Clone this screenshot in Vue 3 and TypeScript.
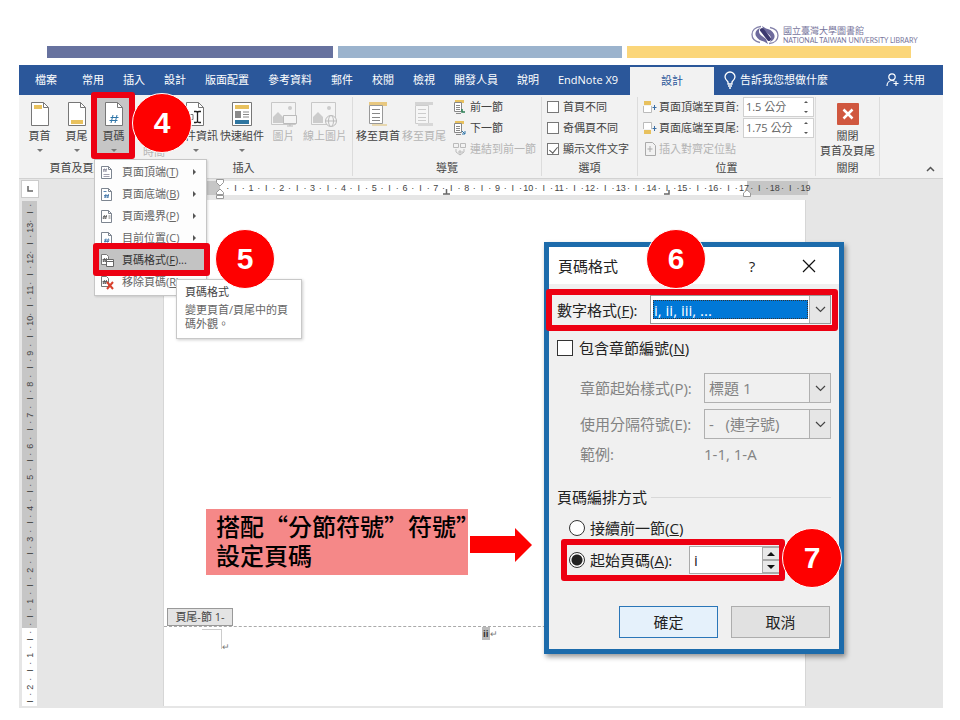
<script setup lang="ts">
import { ref } from 'vue'

const tabs: string[] = ['常用', '插入', '設計', '版面配置', '參考資料', '郵件', '校閱', '檢視', '開發人員', '說明', 'EndNote X9']

interface MenuRow { label: string; key: string; icon: string; sub?: boolean; dots?: boolean; active?: boolean }
const menuRows: MenuRow[] = [
  { label: '頁面頂端', key: 'T', icon: 'top', sub: true },
  { label: '頁面底端', key: 'B', icon: 'bottom', sub: true },
  { label: '頁面邊界', key: 'P', icon: 'margin', sub: true },
  { label: '目前位置', key: 'C', icon: 'current', sub: true },
  { label: '頁碼格式', key: 'F', icon: 'format', dots: true, active: true },
  { label: '移除頁碼', key: 'R', icon: 'remove' },
]

const upTo = (n: number): string[] =>
  Array.from({ length: n }, (_, i) => ['·', 'I', '·', String(i + 1)]).flat()

const horizontalMarks: string[] = upTo(19)
const verticalMarks: string[] = upTo(13).concat(['·', 'I', '·']).reverse()
const footerMarks: string[] = ['·', 'I', '·', '1', '·', 'I', '·', '2', '·', 'I']

const firstDifferent = ref(false)
const oddEven = ref(false)
const showText = ref(true)
const headerGap = ref('1.5 公分')
const footerGap = ref('1.75 公分')
const includeChapter = ref(false)
const numbering = ref('start')
const startAt = ref('i')
</script>

<template>
  <main class="slide">
    <header class="masthead">
      <div class="logo">
        <svg class="logo-mark" viewBox="0 0 28 20" aria-hidden="true">
          <g fill="none" stroke="#8583ab" stroke-width="1.3">
            <path d="M10 1.500C4 2 1 5.500 1 9.500s3 7 8 8" />
            <path d="M18 18.500c6-.5 9-4 9-8s-3-7-8-8" />
          </g>
          <path d="M9 3C5 4.500 3.500 8 5 11s4.500 5 8 5.500L17 19l-2-5-4-3C8 9 7 6.500 9 3z" fill="#6d6a9c" />
          <path d="M19 17c4-1.500 5.500-5 4-8s-4.500-5-8-5.500L11 1l2 5 4 3c3 2 4 4.500 2 8z" fill="#6d6a9c" />
          <path d="M11 5l7 9" stroke="#3c396f" stroke-width="4" stroke-linecap="round" />
        </svg>
        <div class="logo-text">
          <strong>國立臺灣大學圖書館</strong>
          <span>NATIONAL TAIWAN UNIVERSITY LIBRARY</span>
        </div>
      </div>
      <div class="bars"><i class="bar navy"></i><i class="bar sky"></i><i class="bar gold"></i></div>
    </header>

    <section class="word">
      <nav class="tabs">
        <button class="tab file">檔案</button>
        <button v-for="t in tabs" :key="t" class="tab">{{ t }}</button>
        <button class="tab current">設計</button>
        <button class="tab tell">
          <svg width="12" height="18" viewBox="0 0 12 18" fill="none" stroke="#fff" stroke-width="1.3" aria-hidden="true">
            <path d="M4 13v-2C2 9 1 8 1 6a5 5 0 0 1 10 0c0 2-1 3-3 5v2zM4 15h4M5 17h2" />
          </svg>
          告訴我您想做什麼
        </button>
        <button class="tab share">
          <svg width="13" height="14" viewBox="0 0 13 14" fill="none" stroke="#fff" stroke-width="1.2" aria-hidden="true">
            <circle cx="6" cy="4" r="3.2" /><path d="M1 13c0-3 2-5.500 5-5.500 1 0 2 .3 2.500.8M10 8v5M7.500 10.500h5" />
          </svg>
          共用
        </button>
      </nav>

      <div class="ribbon">
        <section class="group g-hf">
          <div class="tools">
            <button class="big">
              <svg width="20" height="26" viewBox="0 0 20 26" aria-hidden="true"><path d="M1.500 1.500h12l5 5v18h-17z" fill="#fff" stroke="#777" /><path d="M13.500 1.500v5h5" fill="none" stroke="#777" /><path d="M4 4h8v4H4z" fill="#e8c15e" /></svg>
              <span>頁首</span><i class="caret"></i>
            </button>
            <button class="big">
              <svg width="20" height="26" viewBox="0 0 20 26" aria-hidden="true"><path d="M1.500 1.500h12l5 5v18h-17z" fill="#fff" stroke="#777" /><path d="M13.500 1.500v5h5" fill="none" stroke="#777" /><path d="M4 19h12v4H4z" fill="#e8c15e" /></svg>
              <span>頁尾</span><i class="caret"></i>
            </button>
            <button class="big pressed">
              <svg width="20" height="26" viewBox="0 0 20 26" aria-hidden="true"><path d="M1.500 1.500h12l5 5v18h-17z" fill="#fff" stroke="#777" /><path d="M13.500 1.500v5h5" fill="none" stroke="#777" /><path d="M9 14l-2 8M13 14l-2 8M6.500 16.500h8M5.500 19.500h8" fill="none" stroke="#2e75a8" /></svg>
              <span>頁碼</span><i class="caret"></i>
            </button>
          </div>
          <h2>頁首及頁尾</h2>
        </section>

        <section class="group g-insert">
          <div class="tools">
            <button class="big date off"><svg width="20" height="26" viewBox="0 0 20 26" aria-hidden="true"><path d="M2 4h16v18H2z" fill="#fff" stroke="#999" /></svg><span>日期及<br />時間</span></button>
            <button class="big wide">
              <svg width="26" height="26" viewBox="0 0 26 26" aria-hidden="true"><path d="M3.500 1.500h12l5 5v18h-17z" fill="#fff" stroke="#777" /><path d="M15.500 1.500v5h5" fill="none" stroke="#777" /><path d="M11 10.500h2q1 0 1.500 1 .5-1 1.500-1h2M11 21.500h2q1 0 1.500-1 .5 1 1.500 1h2M14.500 11v10" fill="none" stroke="#222" stroke-width="1.300" /><path d="M5 13.500h5v5H5" fill="none" stroke="#777" /></svg>
              <span>文件資訊</span><i class="caret"></i>
            </button>
            <button class="big wide">
              <svg width="22" height="26" viewBox="0 0 22 26" aria-hidden="true"><path d="M1.500 1.500h19v23h-19z" fill="#fff" stroke="#777" /><path d="M4 4h14v4H4z" fill="#e8c15e" /><path d="M4 10h6v7H4z" fill="#8a8a8a" /><path d="M12 11h6M12 13.500h6M12 16h6" stroke="#888" /><path d="M4 19h14v4H4z" fill="#2e75a0" /></svg>
              <span>快速組件</span><i class="caret"></i>
            </button>
            <button class="big off" disabled>
              <svg width="28" height="26" viewBox="0 0 28 26" aria-hidden="true"><path d="M1.500 1.500h24v22h-24z" fill="#f4f4f4" stroke="#c8c8c8" /><circle cx="20" cy="7" r="2" fill="#ccc" /><path d="M3 22v-6l5-5 5 5v6z" fill="#ccc" /><path d="M13.500 14.500h13v8h-13zM20 22v3M17 25h6" fill="#f4f4f4" stroke="#bbb" /></svg>
              <span>圖片</span>
            </button>
            <button class="big wide off" disabled>
              <svg width="30" height="26" viewBox="0 0 30 26" aria-hidden="true"><path d="M1.500 1.500h24v22h-24z" fill="#f4f4f4" stroke="#c8c8c8" /><circle cx="19" cy="7" r="2" fill="#ccc" /><path d="M3 22v-6l5-5 5 5v6z" fill="#ccc" /><g fill="#f4f4f4" stroke="#bbb"><circle cx="21" cy="20" r="5.500" /><ellipse cx="21" cy="20" rx="2.500" ry="5.500" /><path d="M15.500 20h11" /></g></svg>
              <span>線上圖片</span>
            </button>
          </div>
          <h2>插入</h2>
        </section>

        <section class="group g-nav">
          <div class="tools">
            <button class="big wide">
              <svg width="22" height="26" viewBox="0 0 22 26" aria-hidden="true"><path d="M2 4V1h18v4h-5" fill="#e8c880" /><path d="M2.500 4.500h13v18h-13z" fill="#fff" stroke="#999" /><path d="M5 8.500h8M5 12.500h8M5 16.500h8M5 19.500h8" stroke="#888" /><path d="M5 23h15v2H5z" fill="#e8d8b0" /></svg>
              <span>移至頁首</span>
            </button>
            <button class="big wide off" disabled>
              <svg width="22" height="26" viewBox="0 0 22 26" aria-hidden="true"><path d="M2 4V1h18v3h-5" fill="#d4d4d4" /><path d="M2.500 4.500h13v18h-13z" fill="#f6f6f6" stroke="#ccc" /><path d="M5 8.500h8M5 12.500h8M5 16.500h8M5 19.500h8" stroke="#ccc" /><path d="M5 22h15v3H5z" fill="#d8d8d8" /></svg>
              <span>移至頁尾</span>
            </button>
            <div class="stack">
              <button class="small"><svg width="13" height="14" viewBox="0 0 13 14" aria-hidden="true"><path d="M2 0h9v3H2z" fill="#e8c15e" /><path d="M1.500 2.500h7v9h-7z" fill="#fff" stroke="#888" /><path d="M3 5.500h4M3 7.500h4M3 9.500h4M3 13.500h5" stroke="#888" /><path d="M12 12H9v-3" fill="none" stroke="#2c8055" stroke-width="1.500" /></svg>前一節</button>
              <button class="small"><svg width="13" height="14" viewBox="0 0 13 14" aria-hidden="true"><path d="M2 0h9v3H2z" fill="#e8c15e" /><path d="M1.500 2.500h7v9h-7z" fill="#fff" stroke="#888" /><path d="M3 5.500h4M3 7.500h4M3 9.500h4M3 13.500h5" stroke="#888" /><path d="M9 10l3 3M12 10v3H9" fill="none" stroke="#2e75a8" /></svg>下一節</button>
              <button class="small off" disabled><svg width="13" height="14" viewBox="0 0 13 14" fill="none" stroke="#bbb" aria-hidden="true"><path d="M.5 1.500h5v4h-5zM7.500 1.500h5v4h-5zM3 7v3l4 3 4-3V7M7 13V8M5 10h5" /></svg>連結到前一節</button>
            </div>
          </div>
          <h2>導覽</h2>
        </section>

        <section class="group g-opts">
          <div class="tools stack">
            <label class="small"><input v-model="firstDifferent" type="checkbox" class="box" />首頁不同</label>
            <label class="small"><input v-model="oddEven" type="checkbox" class="box" />奇偶頁不同</label>
            <label class="small"><input v-model="showText" type="checkbox" class="box" />顯示文件文字</label>
          </div>
          <h2>選項</h2>
        </section>

        <section class="group g-pos">
          <div class="tools stack">
            <div class="small">
              <svg width="14" height="14" viewBox="0 0 14 14" aria-hidden="true"><path d="M1 1h7v4H1z" fill="#e8c15e" /><path d="M.5 6v6.500h8V6" fill="#fff" stroke="#bbb" /><path d="M11.500 5v5M9.500 7.500h4" stroke="#3a6ea5" /></svg>
              <label for="gap-top">頁面頂端至頁首:</label>
              <span class="spin"><input id="gap-top" v-model="headerGap" type="text" /><i class="updown"></i></span>
            </div>
            <div class="small">
              <svg width="14" height="14" viewBox="0 0 14 14" aria-hidden="true"><path d="M.5 8V1.500h8V8" fill="#fff" stroke="#bbb" /><path d="M1 9h7v4H1z" fill="#e8c15e" /><path d="M11.500 5v5M9.500 7.500h4" stroke="#3a6ea5" /></svg>
              <label for="gap-bottom">頁面底端至頁尾:</label>
              <span class="spin"><input id="gap-bottom" v-model="footerGap" type="text" /><i class="updown"></i></span>
            </div>
            <button class="small off" disabled><svg width="14" height="14" viewBox="0 0 14 14" fill="none" stroke="#aaa" aria-hidden="true"><path d="M2.500.5h7l3 3v10h-10zM7 4v6M4.500 7h5" /></svg>插入對齊定位點</button>
          </div>
          <h2>位置</h2>
        </section>

        <section class="group g-close">
          <div class="tools">
            <button class="big shut">
              <svg width="22" height="26" viewBox="0 0 22 26" aria-hidden="true"><rect y="2" width="22" height="22" rx="1" fill="#d0573f" /><path d="M6.500 8.500l9 9M15.500 8.500l-9 9" stroke="#fff" stroke-width="2.500" /></svg>
              <span>關閉<br />頁首及頁尾</span>
            </button>
          </div>
          <h2>關閉</h2>
        </section>
        <button class="collapse" aria-label="摺疊"><svg width="9" height="6" viewBox="0 0 9 6" fill="none" stroke="#555" stroke-width="1.500"><path d="M1 5l3.500-3.500L8 5" /></svg></button>
      </div>

      <div class="workspace">
        <div class="corner"><svg width="8" height="8" viewBox="0 0 8 8" fill="none" stroke="#666" stroke-width="1.500"><path d="M2 1v5h5" /></svg></div>
        <div class="ruler">
          <div class="ruler-margin"></div>
          <div class="marks"><span v-for="(m, i) in horizontalMarks" :key="i">{{ m }}</span></div>
          <svg class="indent" width="10" height="22" viewBox="0 0 10 22" fill="#fff" stroke="#999" aria-hidden="true"><path d="M1.500 1.500h7v3L5 8 1.500 4.500zM5 11l3.500 3.500v2h-7v-2zM1.500 17.500h7v3h-7z" /></svg>
          <svg class="indent right" width="10" height="8" viewBox="0 0 10 8" fill="#fff" stroke="#999" aria-hidden="true"><path d="M5 1l3.500 3V7.500h-7V4z" /></svg>
          <svg class="stop" width="6" height="6" viewBox="0 0 6 6" fill="none" stroke="#666" stroke-width="1.500"><path d="M0 5h5V1" /></svg>
          <svg class="stop mid" width="7" height="6" viewBox="0 0 7 6" fill="none" stroke="#666" stroke-width="1.500"><path d="M0 5h7M3.500 0v5" /></svg>
        </div>
        <div class="vruler">
          <div class="vmarks body"><span v-for="(m, i) in verticalMarks" :key="i">{{ m }}</span></div>
          <div class="vmarks foot"><span v-for="(m, i) in footerMarks" :key="i">{{ m }}</span></div>
        </div>
        <article class="page">
          <div class="page-body"></div>
          <div class="page-foot">
            <span class="foot-tag">頁尾-節 1-</span>
            <div class="foot-line">
              <i class="crop"></i><span class="ret">↵</span>
              <p><mark>ii</mark>↵</p>
            </div>
          </div>
        </article>
      </div>
    </section>

    <menu class="dropdown">
      <li v-for="r in menuRows" :key="r.key">
        <button class="item" :class="{ active: r.active }">
          <svg width="14" height="15" viewBox="0 0 14 15" fill="none" aria-hidden="true">
            <path v-if="r.icon !== 'format' && r.icon !== 'remove'" d="M1.500 1.500h7l3 3v9h-10zM8.500 1.500v3h3" fill="#fff" stroke="#7d8590" />
            <path v-if="r.icon === 'top'" d="M4.500 3.500l-1 3M6.500 3.500l-1 3M3 4.500h4M3 6h4M3.500 9.500h6M3.500 11.500h6" stroke="#889" stroke-width=".8" />
            <path v-if="r.icon === 'bottom'" d="M6 7l-1 4M8.500 7l-1 4M4 8.500h5M4 10h5M3.500 4.500h3" stroke="#4a7bab" stroke-width=".9" />
            <path v-if="r.icon === 'margin'" d="M4.500 6l-1 4M6.500 6l-1 4M3 7.500h4M2.500 9h4M8.500 7h2M8.500 9h2" stroke="#666" stroke-width=".9" />
            <path v-if="r.icon === 'current'" d="M6 7.500l-1 4M8.500 7.500l-1 4M4 9h5.500M4 10.500h5" stroke="#4a7bab" stroke-width=".9" />
            <template v-if="r.icon === 'format' || r.icon === 'remove'">
              <path d="M1.500 1.500h5l2 2v8h-7z" fill="#fff" stroke="#777" />
              <path d="M4.500 5l-1 4M6.500 5l-1 4M2.500 6.500h5M2.500 8h4" stroke="#555" stroke-width=".9" />
              <path v-if="r.icon === 'format'" d="M6.500 6.500h7v7h-7zM6.500 8.500h7" fill="#fff" stroke="#666" />
              <path v-else d="M7 7l6 7M13 7l-6 7" stroke="#d8402c" stroke-width="2" />
            </template>
          </svg>
          <span class="item-label">{{ r.label }}(<u>{{ r.key }}</u>){{ r.dots ? '...' : '' }}</span>
          <i v-if="r.sub" class="sub"></i>
        </button>
      </li>
    </menu>

    <aside class="tooltip" role="tooltip"><b>頁碼格式</b><p>變更頁首/頁尾中的頁碼外觀。</p></aside>

    <p class="callout">搭配“分節符號”符號”<br />設定頁碼</p>
    <svg class="arrow" width="62" height="34" viewBox="0 0 62 34" aria-hidden="true"><path d="M0 8h45V0l17 17-17 17v-9H0z" fill="#fe0000" /></svg>

    <form class="dialog" @submit.prevent>
      <div class="titlebar">
        <h1>頁碼格式</h1>
        <button type="button" class="help">?</button>
        <button type="button" class="x" aria-label="關閉"><svg width="14" height="14" viewBox="0 0 14 14" stroke="#111" stroke-width="1.200"><path d="M1 1l12 12M13 1L1 13" /></svg></button>
      </div>
      <div class="content">
        <div class="row format">
          <label for="nf">數字格式(<u>F</u>):</label>
          <div class="picker chosen">
            <select id="nf"><option>i, ii, iii, ...</option></select>
            <i class="drop"><svg width="11" height="7" viewBox="0 0 11 7" fill="none" stroke="#444" stroke-width="1.200"><path d="M1 1l4.500 4.500L10 1" /></svg></i>
          </div>
        </div>
        <label class="row include"><input v-model="includeChapter" type="checkbox" class="box lg" /><span>包含章節編號(<u>N</u>)</span></label>
        <div class="chapter">
          <label for="ch">章節起始樣式(P):</label>
          <div class="picker">
            <select id="ch" disabled><option>標題 1</option></select>
            <i class="drop"><svg width="11" height="7" viewBox="0 0 11 7" fill="none" stroke="#444" stroke-width="1.200"><path d="M1 1l4.500 4.500L10 1" /></svg></i>
          </div>
          <label for="sp">使用分隔符號(E):</label>
          <div class="picker">
            <select id="sp" disabled><option>-&nbsp;&nbsp;&nbsp;(連字號)</option></select>
            <i class="drop"><svg width="11" height="7" viewBox="0 0 11 7" fill="none" stroke="#444" stroke-width="1.200"><path d="M1 1l4.500 4.500L10 1" /></svg></i>
          </div>
          <span class="sample">範例:</span><span class="sample">1-1, 1-A</span>
        </div>
        <div class="heading"><span>頁碼編排方式</span><i></i></div>
        <label class="row radio"><input v-model="numbering" type="radio" name="numbering" value="continue" /><span>接續前一節(<u>C</u>)</span></label>
        <div class="row radio start">
          <input id="st" v-model="numbering" type="radio" name="numbering" value="start" />
          <label for="st">起始頁碼(<u>A</u>):</label>
          <span class="stepper">
            <input v-model="startAt" type="text" aria-label="起始頁碼" />
            <span class="steps"><button type="button" aria-label="增加"><i class="up"></i></button><button type="button" aria-label="減少"><i class="down"></i></button></span>
          </span>
        </div>
        <div class="actions"><button type="submit" class="ok">確定</button><button type="button">取消</button></div>
      </div>
    </form>

    <i class="frame f4"></i><i class="frame f5"></i><i class="frame f6"></i><i class="frame f7"></i>
    <b class="badge b4">4</b><b class="badge b5">5</b><b class="badge b6">6</b><b class="badge b7">7</b>
  </main>
</template>

<style>
body { margin: 0; background: #fff; }
</style>

<style scoped>
* { box-sizing: border-box; }
button, input, select { font: inherit; color: inherit; margin: 0; }
button { border: 0; padding: 0; background: none; white-space: nowrap; }
h1, h2, p, menu { margin: 0; padding: 0; font-weight: 400; }
svg { display: block; flex: none; }
i { font-style: normal; }

.slide {
  position: relative; display: flex; flex-direction: column; min-height: 100vh;
  padding: 24px 17px 12px 19px; overflow: hidden;
  font: 11px/16px "Open Sans", "Noto Sans CJK TC", sans-serif; color: #444;
}
.masthead { display: flex; flex-direction: column; height: 41px; padding: 0 32px 0 28px; }
.logo { display: flex; align-items: center; gap: 4px; align-self: flex-end; height: 22px; color: #77759c; }
.logo-mark { width: 28px; height: 20px; }
.logo-text { display: flex; flex-direction: column; width: 128px; white-space: nowrap; }
.logo-text strong { font-size: 9px; line-height: 11px; font-weight: 400; }
.logo-text span { font: 7px/9px Lato, "Liberation Sans", sans-serif; }
.bars { display: flex; gap: 5px; }
.bar { flex: 284; height: 12px; }
.navy { flex-grow: 286; background: #67729f; }
.sky { background: #9bb3cd; }
.gold { background: #fbd67a; }

.word { display: flex; flex-direction: column; flex: 1; background: #e6e6e6; }
.tabs { display: flex; align-items: stretch; gap: 19px; height: 30px; padding: 0 18px 0 16px; background: #2b579a; }
.tab { color: #fff; line-height: 30px; }
.file { margin-right: 6px; }
.current { width: 84px; margin: 2px -9px 0 -7px; background: #f2f2f2; color: #2b579a; line-height: 26px; }
.tell, .share { display: flex; align-items: center; gap: 4px; }
.share { margin-left: auto; }

.ribbon { display: flex; height: 84px; padding: 2px 0; background: #f2f2f2; border-bottom: 1px solid #d2d2d2; }
.group { display: flex; flex-direction: column; border-right: 1px solid #dcdcdc; flex: none; }
.group h2 { font-size: 11px; line-height: 16px; text-align: center; white-space: nowrap; }
.tools { display: flex; height: 63px; }
.g-hf { width: 116px; border-right: 0; }
.g-hf .tools { padding-left: 2px; }
.g-insert { width: 218px; }
.g-nav { width: 189px; }
.g-nav .tools { padding-left: 2px; }
.g-opts { width: 96px; }
.g-opts .tools { padding-left: 5px; }
.g-pos { width: 178px; }
.g-pos .tools { padding-left: 5px; }
.g-close { width: 64px; }
.big { display: flex; flex-direction: column; align-items: center; flex: none; width: 37px; padding-top: 4px; }
.big svg { margin-bottom: 1px; }
.big.wide { width: 46px; }
.big.shut { width: 63px; }
.big.shut span { line-height: 15px; }
.big.date { width: 38px; }
.big.pressed { background: #c6c6c6; }
.off { color: #b5b5b5; }
.caret { margin-top: 5px; border: 3px solid transparent; border-top-color: #777; border-bottom: 0; }
.stack { display: flex; flex-direction: column; align-items: flex-start; gap: 1px; }
.g-nav .stack { padding-left: 6px; }
.small { display: flex; align-items: center; gap: 4px; height: 20px; white-space: nowrap; }
.g-pos .small { gap: 2px; }
.spin { display: flex; align-items: center; width: 71px; height: 20px; margin-left: 2px; padding-right: 4px; background: #fff; border: 1px solid #d0d0d0; color: #666; }
.spin input { width: 60px; border: 0; padding: 0 2px; background: none; line-height: 16px; }
.updown { display: flex; flex-direction: column; justify-content: space-between; height: 12px; }
.updown::before, .updown::after { content: ""; border: 2px solid transparent; }
.updown::before { border-bottom-color: #555; border-top: 0; }
.updown::after { border-top-color: #555; border-bottom: 0; }
.box { appearance: none; display: grid; place-items: center; width: 12px; height: 12px; background: #fff; border: 1px solid #777; flex: none; }
.box:checked::after { content: ""; width: 4px; height: 7px; border: solid #555; border-width: 0 1px 1px 0; transform: rotate(40deg); }
.collapse { margin: auto 8px 4px auto; }

.workspace { display: grid; grid-template: 21px 1fr / 144px 1fr; flex: 1; }
.corner { display: grid; place-items: center; width: 18px; height: 18px; margin: 1px 0 0 2px; background: #fff; border: 1px solid #ccc; }
.ruler { position: relative; display: flex; width: 645px; height: 14px; margin-top: 2px; background: linear-gradient(90deg, #c6c6c6 57px, #fff 57px 584px, #c6c6c6 584px); }
.ruler-margin { width: 61px; }
.marks { display: flex; flex: 1; margin-right: -1px; }
.marks span, .vmarks span { display: flex; flex: 1 1 0; justify-content: center; align-items: center; min-width: 0; min-height: 0; font: 9px/12px "Liberation Sans", sans-serif; color: #444; }
.indent { position: absolute; left: 52px; top: -3px; }
.indent.right { left: 579px; top: 8px; }
.stop { position: absolute; left: 501px; top: 8px; }
.stop.mid { left: 280px; top: 8px; }
.vruler { display: flex; flex-direction: column; width: 15px; margin: 1px 0 2px 3px; }
.vmarks { display: flex; flex-direction: column; }
.vmarks span { writing-mode: vertical-rl; transform: rotate(180deg); }
.vmarks.body { flex: 426; background: #c6c6c6; }
.vmarks.foot { flex: 78; background: #fff; }
.page { display: flex; flex-direction: column; width: 643px; margin-bottom: 2px; background: #fff; border: solid #d6d6d6; border-width: 0 1px; }
.page-body { flex: 1; }
.page-foot { height: 98px; }
.foot-tag { display: block; width: 66px; height: 18px; margin-left: 3px; background: #e4e4e4; border: 1px solid #999; text-align: center; white-space: nowrap; }
.foot-line { display: flex; border-top: 1px dashed #aaa; font-size: 9px; line-height: 14px; color: #777; }
.crop { width: 20px; height: 20px; margin: 2px 0 0 38px; border: solid #ccc; border-width: 1px 1px 0 0; }
.ret { margin-top: 13px; }
.foot-line p { margin-left: 252px; }
mark { padding: 0 1px; background: #bbb; color: #333; font-weight: 700; }

.dropdown { position: absolute; left: 94px; top: 159px; width: 113px; padding: 1px 1px 2px; background: #fdfdfd; border: 1px solid #c6c6c6; list-style: none; box-shadow: 1px 1px 2px #0002; color: #666; }
.item { display: flex; align-items: center; width: 100%; height: 22px; padding: 0 9px 0 4px; text-align: left; }
.item.active { background: #c3c3c3; color: #333; }
.item-label { margin-left: 8px; }
.sub { margin-left: auto; border: 3px solid transparent; border-left-color: #555; border-right: 0; }
.tooltip { position: absolute; left: 176px; top: 279px; width: 126px; padding: 5px 8px 7px; background: #fff; border: 1px solid #c8c8c8; box-shadow: 1px 1px 3px #0003; line-height: 14px; color: #666; }
.tooltip b { display: block; margin-bottom: 4px; font-weight: 400; color: #444; }
.callout { position: absolute; left: 206px; top: 509px; width: 262px; height: 66px; padding: 2px 0 4px 10px; background: #f58888; color: #000; font: 500 24px/29px "Noto Sans CJK TC", sans-serif; white-space: nowrap; }
.arrow { position: absolute; left: 470px; top: 528px; }

.dialog { position: absolute; left: 544px; top: 242px; width: 300px; border: 5px solid #1c6bab; background: #f0f0f0; color: #222; box-shadow: 2px 3px 5px #0006; font-size: 15px; line-height: 20px; }
.titlebar { display: flex; align-items: center; height: 37px; padding: 0 23px 0 9px; background: #fff; }
.titlebar h1 { flex: 1; font-size: 15px; }
.help { width: 14px; margin-right: 43px; }
.content { display: flex; flex-direction: column; padding: 11px 8px; }
.row { display: flex; align-items: center; }
.format { justify-content: space-between; height: 29px; }
.format label { white-space: nowrap; }
.picker { display: flex; align-items: stretch; height: 30px; border: 1px solid #b0b0b0; }
.picker select { appearance: none; flex: 1; min-width: 0; padding: 0 4px; border: 0; border-radius: 0; background: none; color: inherit; opacity: 1; }
.chosen { width: 181px; height: 29px; background: #fff; border-color: #999; }
.chosen select { margin: 4px 1px 4px 2px; padding: 0 1px; background: #0078d7; color: #fff; outline: 1px dotted #333; outline-offset: -1px; }
.drop { display: grid; place-items: center; width: 21px; background: #e6e6e6; border-left: 1px solid #b0b0b0; }
.include { gap: 6px; height: 16px; margin-top: 16px; }
.box.lg { width: 16px; height: 16px; border-color: #333; }
.chapter { display: grid; grid-template: 30px 30px 20px / 1fr 127px; gap: 6px 0; align-items: center; margin: 17px 0 0 23px; color: #838383; white-space: nowrap; }
.sample { margin-top: -2px; }
.heading { display: flex; align-items: center; gap: 4px; margin: 22px 0 11px; }
.heading i { flex: 1; border-top: 1px solid #d8d8d8; }
.radio { gap: 5px; height: 20px; margin-left: 12px; white-space: nowrap; }
.radio > input { appearance: none; width: 16px; height: 16px; border: 1px solid #333; border-radius: 50%; background: #fff; }
.radio > input:checked { background: radial-gradient(circle, #222 5px, #fff 6px); }
.start { height: 28px; margin-top: 8px; }
.stepper { display: flex; width: 92px; height: 28px; margin-left: auto; margin-right: 50px; border: 1px solid #aaa; background: #fff; }
.stepper input { width: 72px; padding: 0 4px; border: 0; background: none; }
.steps { display: grid; grid-template-rows: 1fr 1fr; width: 18px; }
.steps button { display: grid; place-items: center; background: #e8e8e8; border: 1px solid #aaa; }
.up, .down { border: 4px solid transparent; }
.up { border-bottom-color: #111; border-top: 0; }
.down { border-top-color: #111; border-bottom: 0; }
.actions { display: flex; justify-content: flex-end; gap: 13px; margin: 32px 1px 0 0; }
.actions button { width: 99px; height: 32px; background: #e1e1e1; border: 1px solid #adadad; }
.actions .ok { background: #e5f1fb; border-color: #2a76b8; }

.frame { position: absolute; border: 6px solid #ed0012; border-radius: 3px; }
.f4 { left: 91px; top: 92px; width: 44px; height: 67px; }
.f5 { left: 93px; top: 243px; width: 117px; height: 33px; }
.f6 { left: 546px; top: 289px; width: 292px; height: 42px; }
.f7 { left: 561px; top: 539px; width: 224px; height: 42px; }
.badge { position: absolute; display: grid; place-items: center; width: 60px; height: 60px; border: 1px solid #fff; border-radius: 50%; background: #fe0000; color: #fff; font: 700 30px/32px "Liberation Sans", sans-serif; }
.b4 { left: 132px; top: 93px; }
.b5 { left: 215px; top: 229px; }
.b6 { left: 646px; top: 229px; }
.b7 { left: 782px; top: 528px; }
</style>
